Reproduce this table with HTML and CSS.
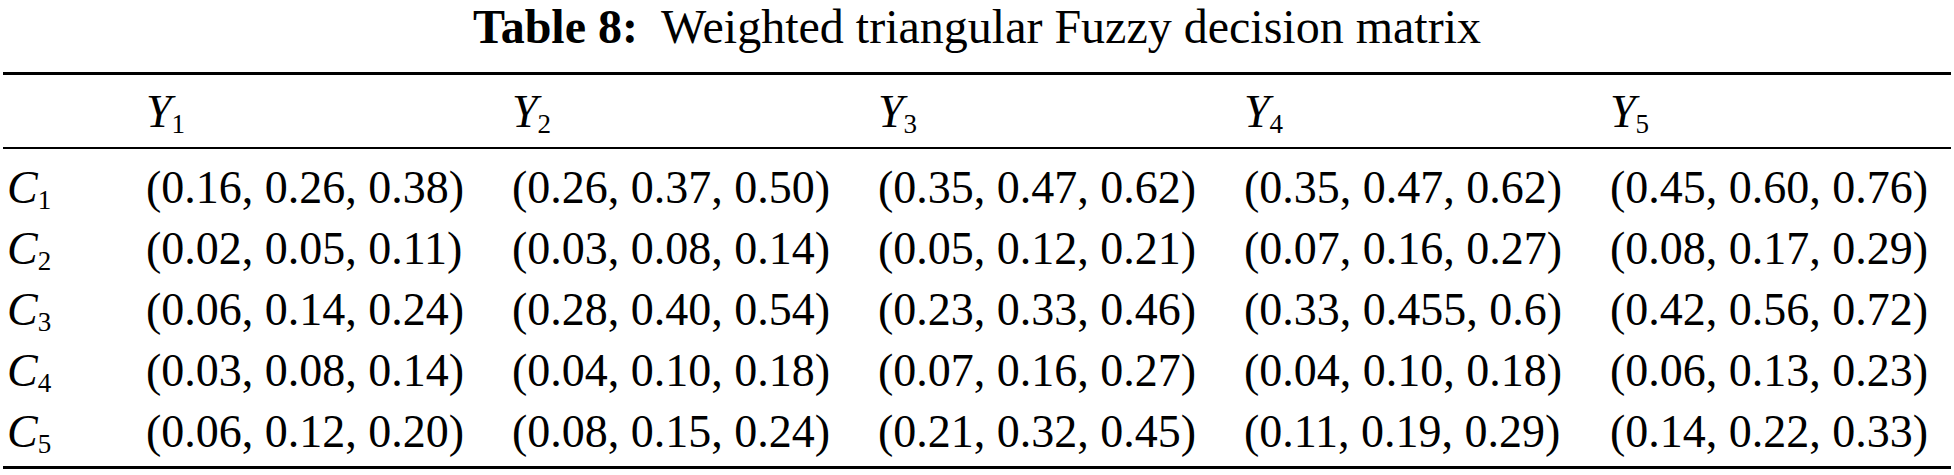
FILE: index.html
```html
<!DOCTYPE html>
<html lang="en">
    <head>
        <meta charset="utf-8">
        <title>Table 8</title>
        <link rel="stylesheet" href="styles.css">
    </head>
    <body>
        <p class="caption"><b>Table 8:</b>&nbsp; Weighted triangular Fuzzy decision matrix</p>
        <table class="matrix">
            <colgroup>
                <col class="labelCol">
                <col class="dataCol">
                <col class="dataCol">
                <col class="dataCol">
                <col class="dataCol">
                <col>
            </colgroup>
            <thead>
                <tr>
                    <th></th>
                    <th><i>Y</i><sub>1</sub></th>
                    <th><i>Y</i><sub>2</sub></th>
                    <th><i>Y</i><sub>3</sub></th>
                    <th><i>Y</i><sub>4</sub></th>
                    <th><i>Y</i><sub>5</sub></th>
                </tr>
            </thead>
            <tbody>
                <tr>
                    <td><i>C</i><sub>1</sub></td>
                    <td>(0.16, 0.26, 0.38)</td>
                    <td>(0.26, 0.37, 0.50)</td>
                    <td>(0.35, 0.47, 0.62)</td>
                    <td>(0.35, 0.47, 0.62)</td>
                    <td>(0.45, 0.60, 0.76)</td>
                </tr>
                <tr>
                    <td><i>C</i><sub>2</sub></td>
                    <td>(0.02, 0.05, 0.11)</td>
                    <td>(0.03, 0.08, 0.14)</td>
                    <td>(0.05, 0.12, 0.21)</td>
                    <td>(0.07, 0.16, 0.27)</td>
                    <td>(0.08, 0.17, 0.29)</td>
                </tr>
                <tr>
                    <td><i>C</i><sub>3</sub></td>
                    <td>(0.06, 0.14, 0.24)</td>
                    <td>(0.28, 0.40, 0.54)</td>
                    <td>(0.23, 0.33, 0.46)</td>
                    <td>(0.33, 0.455, 0.6)</td>
                    <td>(0.42, 0.56, 0.72)</td>
                </tr>
                <tr>
                    <td><i>C</i><sub>4</sub></td>
                    <td>(0.03, 0.08, 0.14)</td>
                    <td>(0.04, 0.10, 0.18)</td>
                    <td>(0.07, 0.16, 0.27)</td>
                    <td>(0.04, 0.10, 0.18)</td>
                    <td>(0.06, 0.13, 0.23)</td>
                </tr>
                <tr>
                    <td><i>C</i><sub>5</sub></td>
                    <td>(0.06, 0.12, 0.20)</td>
                    <td>(0.08, 0.15, 0.24)</td>
                    <td>(0.21, 0.32, 0.45)</td>
                    <td>(0.11, 0.19, 0.29)</td>
                    <td>(0.14, 0.22, 0.33)</td>
                </tr>
            </tbody>
        </table>
    </body>
</html>
```

FILE: styles.css
```css
* {
    margin: 0;
    padding: 0;
    box-sizing: border-box;
}
body {
    background: #fff;
    color: #000;
    font-family: "Liberation Serif", "Times New Roman", serif;
    font-size: 46px;
}
.caption {
    text-align: center;
    font-size: 48px;
    line-height: 54px;
    height: 54px;
    margin-bottom: 18px;
    white-space: pre;
}
.matrix {
    width: calc(100% - 6px);
    margin: 0 3px;
    border-collapse: collapse;
    table-layout: fixed;
    border-top: 3px solid #000;
    border-bottom: 3px solid #000;
}
.labelCol {
    width: 143px;
}
.dataCol {
    width: 366px;
}
th, td {
    text-align: left;
    font-weight: normal;
    line-height: 61px;
    white-space: nowrap;
    vertical-align: top;
}
th:first-child, td:first-child {
    padding-left: 4px;
}
thead tr {
    border-bottom: 2px solid #000;
}
th {
    padding-top: 6px;
    padding-bottom: 5px;
}
tbody tr:first-child td {
    padding-top: 8px;
}
tbody tr:last-child td {
    padding-bottom: 4px;
}
sub {
    font-size: 27px;
    line-height: 1;
    vertical-align: -6px;
}
```
